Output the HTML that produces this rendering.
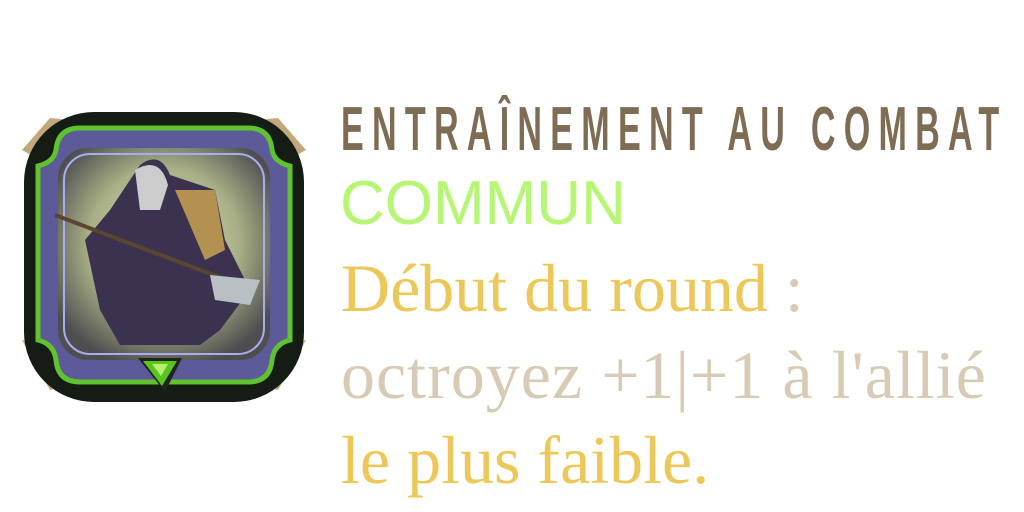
<!DOCTYPE html>
<html><head><meta charset="utf-8"><style>
html,body{margin:0;padding:0;background:#fff;width:1024px;height:512px;overflow:hidden;position:relative}
.t{position:absolute;white-space:nowrap}
#title{left:341px;top:90px;font-family:"Liberation Sans Narrow","Liberation Sans",sans-serif;font-weight:bold;font-size:62px;color:#7f6c55;letter-spacing:15px;transform:scaleX(0.55);transform-origin:0 0;line-height:80px}
#rar{left:340px;top:168px;font-family:"Liberation Sans",sans-serif;font-size:62px;color:#b7f675;line-height:72px}
.s{font-family:"Liberation Serif",serif;font-size:68px;line-height:80px}
.y{color:#ecc85a}.g{color:#d7cbb5}
</style></head><body>
<svg width="330" height="420" style="position:absolute;left:0;top:90px" viewBox="0 0 330 420">
<defs>
<radialGradient id="bg" cx="0.5" cy="0.45" r="0.6"><stop offset="0" stop-color="#dfe7c0"/><stop offset="0.6" stop-color="#a7ad84"/><stop offset="1" stop-color="#4e4e50"/></radialGradient>
</defs>
<path d="M22 60 L50 28 L70 30 L40 70 Z M306 60 L278 28 L258 30 L288 70 Z M22 250 L50 300 L70 295 L40 255 Z M306 250 L278 300 L258 295 L288 255 Z" fill="#c1a77a"/>
<rect x="24" y="22" width="280" height="290" rx="70" fill="#151c14"/>
<path d="M80 38 L248 38 Q270 38 272 60 Q274 72 290 76 L290 250 Q274 254 272 270 Q270 292 248 292 L80 292 Q58 292 56 270 Q54 254 38 250 L38 76 Q54 72 56 60 Q58 38 80 38 Z" fill="#5c5a98" stroke="#5fc22e" stroke-width="5"/>
<rect x="58" y="58" width="212" height="212" rx="30" fill="url(#bg)"/>
<rect x="64" y="64" width="200" height="200" rx="26" fill="none" stroke="#a9acef" stroke-width="2"/>
<path d="M140 75 Q160 60 170 85 L215 100 L225 150 L250 200 L220 240 L200 255 L120 255 L100 220 L85 150 L110 120 Z" fill="#3b3250"/>
<path d="M135 80 Q160 65 168 95 L160 120 L140 120 Z" fill="#ccc"/>
<path d="M175 100 L215 100 L225 160 L205 170 Z" fill="#b39251"/>
<line x1="55" y1="125" x2="240" y2="195" stroke="#5a4630" stroke-width="4"/>
<path d="M210 185 L260 190 L250 215 L215 210 Z" fill="#b8c0c4"/>
<path d="M138 268 L182 268 L165 302 Z" fill="#222"/>
<path d="M143 271 L177 271 L162 296 Z" fill="#58c61c"/>
<path d="M152 274 L168 274 L161 286 Z" fill="#b6f06e"/>
</svg>
<div class="t" id="title">ENTRAÎNEMENT AU COMBAT</div>
<div class="t" id="rar">COMMUN</div>
<div class="t s y" style="left:341px;top:248px">Début du round <span class="g">:</span></div>
<div class="t s g" style="left:341px;top:335px;letter-spacing:1px">octroyez +1|+1 à l'allié</div>
<div class="t s y" style="left:341px;top:420px">le plus faible.</div>
</body></html>
